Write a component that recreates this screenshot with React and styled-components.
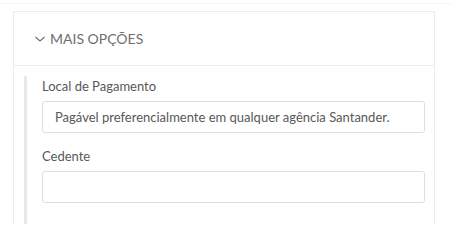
import styled, { createGlobalStyle } from 'styled-components';

const GlobalStyle = createGlobalStyle`
  html, body {
    margin: 0;
    padding: 0;
    background: #ffffff;
    font-family: Lato, "Open Sans", sans-serif;
  }
`;

const Page = styled.div`
  padding: 7px 17px 0 13px;
  margin-top: 3px;
  height: 221px;
  box-sizing: border-box;
  overflow: hidden;
  border-top: 1px solid #f7f7f7;
`;

const Card = styled.div`
  border: 1px solid #ececec;
  border-bottom: none;
  background: #ffffff;
`;

const Header = styled.div`
  display: flex;
  align-items: center;
  gap: 4px;
  height: 53px;
  padding-left: 20px;
  border-bottom: 1px solid #ececec;
  color: #6e6e6e;
  font-size: 14px;
`;

const Body = styled.div`
  padding: 10px 9px 0 10px;
`;

const Group = styled.div`
  border-left: 3px solid #e8e8e8;
  padding: 2px 0 30px 15px;
  display: flex;
  flex-direction: column;
`;

const Label = styled.label`
  font-size: 13px;
  color: #585858;
  line-height: 16px;
  margin-bottom: 7px;
  margin-top: ${(p) => (p.$first ? '0' : '15px')};
`;

const Input = styled.input`
  box-sizing: border-box;
  height: 32px;
  width: 100%;
  border: 1px solid #dedede;
  border-radius: 3px;
  padding: 0 12px;
  font-family: Lato, "Open Sans", sans-serif;
  font-size: 13px;
  color: #585858;
  outline: none;
`;

const Chevron = () => (
  <svg width="12" height="8" viewBox="0 0 12 8">
    <path d="M1.5 2 L6 6 L10.5 2" fill="none" stroke="#6e6e6e" strokeWidth="1.1" />
  </svg>
);

export default function App() {
  return (
    <>
      <GlobalStyle />
      <Page>
        <Card>
          <Header>
            <Chevron />
            <span>MAIS OPÇÕES</span>
          </Header>
          <Body>
            <Group>
              <Label $first>Local de Pagamento</Label>
              <Input readOnly value="Pagável preferencialmente em qualquer agência Santander." />
              <Label>Cedente</Label>
              <Input readOnly value="" />
            </Group>
          </Body>
        </Card>
      </Page>
    </>
  );
}
